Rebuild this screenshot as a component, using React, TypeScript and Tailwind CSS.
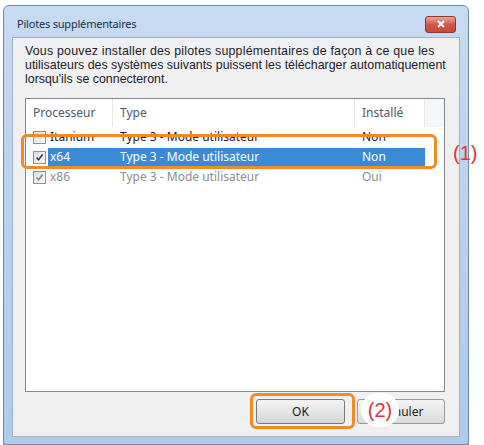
import React from "react";

const Check = ({ gray }: { gray?: boolean }) => (
  <svg width="9" height="9" viewBox="0 0 9 9" className="absolute left-[1px] top-[1px]">
    <path d="M1.5 4.5 L3.6 6.8 L7.6 1.6" fill="none" stroke={gray ? "#8a8a8a" : "#2c3f6a"} strokeWidth="1.7" />
  </svg>
);

const Box = ({ checked, gray }: { checked?: boolean; gray?: boolean }) => (
  <div className="relative w-[13px] h-[13px] border border-[#8e8f8f] bg-gradient-to-br from-[#dcdcdc] to-[#fbfbfb] shrink-0">
    {checked && <Check gray={gray} />}
  </div>
);

export default function App() {
  const rows = [
    { p: "Itanium", t: "Type 3 - Mode utilisateur", i: "Non", checked: false, sel: false, gray: false },
    { p: "x64", t: "Type 3 - Mode utilisateur", i: "Non", checked: true, sel: true, gray: false },
    { p: "x86", t: "Type 3 - Mode utilisateur", i: "Oui", checked: true, sel: false, gray: true },
  ];
  return (
    <div className="relative w-[484px] h-[445px] bg-white overflow-hidden font-['Noto_Sans',sans-serif] text-[12px]">
      <div className="ml-[3px] mt-[5px] w-[466px] h-[440px] border border-[#6b8bb0] rounded-t-[6px] bg-gradient-to-b from-[#c7dbf1] via-[#b9d1ec] to-[#aecbea] flex flex-col px-[8px] pb-[7px]">
        <div className="h-[31px] flex items-center justify-between pl-[5px] pr-[4px] pt-[5px] shrink-0">
          <span className="text-[11px] text-[#1e2f4a] tracking-[-0.2px]">Pilotes supplémentaires</span>
          <div className="w-[31px] h-[17px] rounded-[3px] border border-[#8c3a36] bg-gradient-to-b from-[#e9a49c] via-[#d2584b] to-[#c44a3c] flex items-center justify-center">
            <svg width="8" height="8" viewBox="0 0 8 8">
              <path d="M1 1 L7 7 M7 1 L1 7" stroke="#fff" strokeWidth="2" />
            </svg>
          </div>
        </div>
        <div className="flex-1 bg-[#f0f0f0] border border-[#9fb3c9] flex flex-col pt-[6px] pl-[12px] pr-[14px]">
          <p className="text-[#1c1c2c] text-[12.4px] leading-[14px] mr-[-14px] whitespace-nowrap font-['Liberation_Sans',sans-serif]">
            <span className="tracking-[0.2px]">Vous pouvez installer des pilotes supplémentaires de façon à ce que les</span>
            <br />
            utilisateurs des systèmes suivants puissent les télécharger automatiquement
            <br />
            lorsqu'ils se connecteront.
          </p>
          <div className="mt-[12px] h-[294px] border border-[#828790] bg-white flex flex-col">
            <div className="h-[28px] flex text-[#4a5870] shrink-0">
              <div className="w-[87px] pl-[7px] flex items-center border-r border-[#e6e8eb]">Processeur</div>
              <div className="w-[242px] pl-[7px] flex items-center border-r border-[#e6e8eb]">Type</div>
              <div className="w-[70px] pl-[7px] flex items-center border-r border-[#e6e8eb]">Installé</div>
              <div className="flex-1 bg-[#f6f7f8]"></div>
            </div>
            {rows.map((r) => (
              <div key={r.p} className="h-[20px] flex items-center">
                <div className="w-[22px] pl-[7px] shrink-0">
                  <Box checked={r.checked} gray={r.gray} />
                </div>
                <div
                  className={
                    r.sel
                      ? "w-[377px] h-[18px] flex items-center bg-[#3b8ad6] text-white"
                      : r.gray
                      ? "w-[377px] h-[18px] flex items-center text-[#8d8d8d]"
                      : "w-[377px] h-[18px] flex items-center text-[#1c1c2c]"
                  }
                >
                  <span className="w-[65px] pl-[2px]">{r.p}</span>
                  <span className="w-[242px] pl-[7px]">{r.t}</span>
                  <span className="pl-[7px]">{r.i}</span>
                </div>
              </div>
            ))}
          </div>
          <div className="mt-[7px] flex justify-end gap-[12px]">
            <button className="w-[89px] h-[25px] rounded-[3px] border border-[#7a7a7a] bg-gradient-to-b from-[#f4f4f4] via-[#e6e6e6] to-[#d6d6d6] text-[#1c1c1c]">
              OK
            </button>
            <button className="w-[88px] h-[25px] rounded-[3px] border border-[#9a9a9a] bg-gradient-to-b from-[#f4f4f4] via-[#e8e8e8] to-[#dadada] text-[#1c1c1c]">
              Annuler
            </button>
          </div>
        </div>
      </div>

      {/* annotations */}
      <div className="absolute left-[21px] top-[134px] w-[416px] h-[35px] border-[3px] border-[#f18a27] rounded-[6px]"></div>
      <div className="absolute left-[453px] top-[141px] text-[20px] leading-[24px] text-[#e3343c] font-['Liberation_Sans',sans-serif]">(1)</div>
      <div className="absolute left-[250px] top-[393px] w-[105px] h-[36px] border-[3px] border-[#f18a27] rounded-[6px]"></div>
      <div className="absolute left-[361px] top-[393px] w-[38px] h-[34px] rounded-full bg-white flex items-center justify-center text-[20px] leading-[24px] text-[#e3343c] font-['Liberation_Sans',sans-serif]">
        (2)
      </div>
    </div>
  );
}
